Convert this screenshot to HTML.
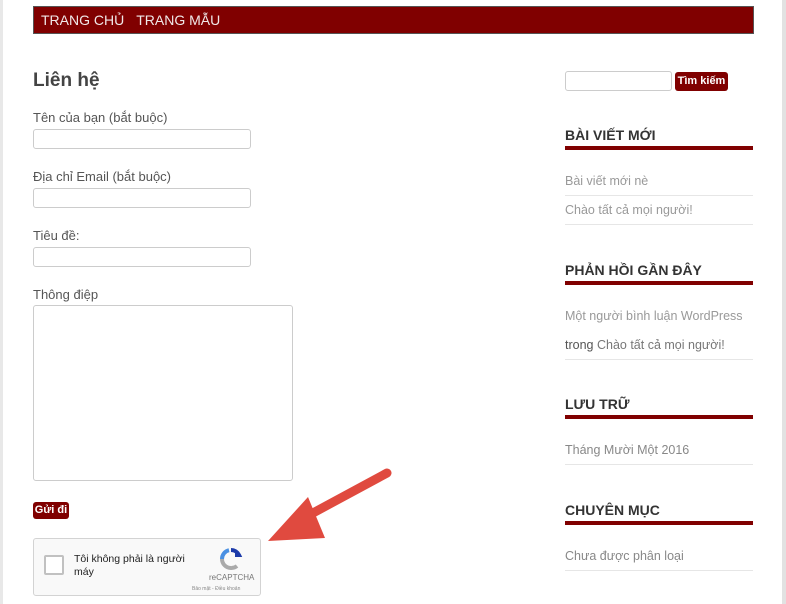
<!DOCTYPE html>
<html><head><meta charset="utf-8"><style>
*{box-sizing:border-box;margin:0;padding:0}
body{width:786px;height:604px;background:#fff;position:relative;overflow:hidden;font-family:"Liberation Sans","DejaVu Sans",sans-serif;color:#555}
.lb{position:absolute;left:0;top:0;width:3px;height:604px;background:#e8e8e8}
.rb{position:absolute;right:0;top:0;width:4px;height:604px;background:#e2e2e2}
.nav{position:absolute;left:33px;top:6px;width:721px;height:28px;background:#800000;border:1px solid #555;color:#f0e8e8;font-size:14px;line-height:26px;padding-left:7px}
.nav span{margin-right:12px}
.a{position:absolute}
h1{position:absolute;left:33px;top:70px;font-size:19px;color:#444;font-weight:bold}
.lbl{position:absolute;left:33px;font-size:13px;color:#555}
.inp{position:absolute;left:33px;width:218px;height:20px;border:1px solid #ccc;border-radius:3px}
.btn{position:absolute;background:#800000;color:#fff;font-weight:bold;font-size:11px;border-radius:3px;text-align:center}
.wt{position:absolute;left:565px;font-size:14px;font-weight:bold;color:#333}
.wl{position:absolute;left:565px;width:188px;height:4px;background:#800000}
.li{position:absolute;left:565px;width:188px;font-size:12.5px;color:#999;border-bottom:1px solid #e6e6e6;height:29px;line-height:28px}
</style></head><body>
<div class="lb"></div><div class="rb"></div>
<div class="nav"><span>TRANG CHỦ</span><span>TRANG MẪU</span></div>
<h1>Liên hệ</h1>
<div class="lbl" style="top:110px">Tên của bạn (bắt buộc)</div>
<div class="inp" style="top:129px"></div>
<div class="lbl" style="top:169px">Địa chỉ Email (bắt buộc)</div>
<div class="inp" style="top:188px"></div>
<div class="lbl" style="top:228px">Tiêu đề:</div>
<div class="inp" style="top:247px"></div>
<div class="lbl" style="top:287px">Thông điệp</div>
<div class="inp" style="top:305px;width:260px;height:176px"></div>
<div class="btn" style="left:33px;top:502px;width:36px;height:17px;line-height:17px">Gửi đi</div>
<div class="a" style="left:33px;top:538px;width:228px;height:58px;background:#f9f9f9;border:1px solid #d3d3d3;border-radius:3px">
<div class="a" style="left:10px;top:16px;width:20px;height:20px;border:2px solid #c1c1c1;border-radius:2px;background:#fff"></div>
<div class="a" style="left:40px;top:14px;font-size:10.5px;color:#222;line-height:13px">Tôi không phải là người<br>máy</div>
<svg class="a" style="left:185px;top:8px" width="24" height="24" viewBox="0 0 24 24"><path d="M12 3a9 9 0 0 1 8 5l-4 0" fill="none" stroke="#1c3aa9" stroke-width="4"/><path d="M3 12a9 9 0 0 1 7-8.8" fill="none" stroke="#4a90e2" stroke-width="4"/><path d="M12 21a9 9 0 0 1-9-9" fill="none" stroke="#aaa" stroke-width="4"/><path d="M12 21a9 9 0 0 0 6-2" fill="none" stroke="#aaa" stroke-width="4"/></svg>
<div class="a" style="left:175px;top:34px;font-size:8px;color:#777">reCAPTCHA</div>
<div class="a" style="left:158px;top:47px;font-size:5px;color:#888">Bảo mật - Điều khoản</div>
</div>
<svg class="a" style="left:260px;top:465px" width="135" height="80" viewBox="0 0 135 80"><path d="M127 8 L40 55" stroke="#e04a3f" stroke-width="9" stroke-linecap="round"/><path d="M48 32 L8 76 L65 73 Z" fill="#e04a3f"/></svg>
<div class="a" style="left:565px;top:71px;width:107px;height:20px;border:1px solid #ccc;border-radius:3px"></div>
<div class="btn" style="left:675px;top:72px;width:53px;height:19px;line-height:19px">Tìm kiếm</div>
<div class="wt" style="top:127px">BÀI VIẾT MỚI</div><div class="wl" style="top:146px"></div>
<div class="li" style="top:167px">Bài viết mới nè</div>
<div class="li" style="top:196px">Chào tất cả mọi người!</div>
<div class="wt" style="top:262px">PHẢN HỒI GẦN ĐÂY</div><div class="wl" style="top:281px"></div>
<div class="li" style="top:302px;border:none">Một người bình luận WordPress</div>
<div class="li" style="top:331px;color:#777"><span style="color:#555">trong</span> Chào tất cả mọi người!</div>
<div class="wt" style="top:396px">LƯU TRỮ</div><div class="wl" style="top:415px"></div>
<div class="li" style="top:436px;color:#888">Tháng Mười Một 2016</div>
<div class="wt" style="top:502px">CHUYÊN MỤC</div><div class="wl" style="top:521px"></div>
<div class="li" style="top:542px;color:#888">Chưa được phân loại</div>
</body></html>
